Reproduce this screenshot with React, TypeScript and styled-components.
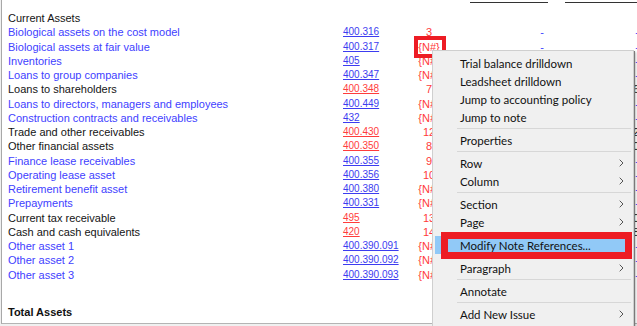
import { FC } from "react";
import styled, { createGlobalStyle } from "styled-components";

type Line = {
  label: string;
  account: string;
  note: string;
  linked: boolean;
  col4: string;
};

type MenuEntry =
  | { kind: "item"; label: string; sub?: boolean; active?: boolean }
  | { kind: "sep" };

const lines: Line[] = [
  { label: "Biological assets on the cost model", account: "400.316", note: "3", linked: true, col4: "-" },
  { label: "Biological assets at fair value", account: "400.317", note: "{N#}", linked: true, col4: "-" },
  { label: "Inventories", account: "405", note: "{N#}", linked: true, col4: "-" },
  { label: "Loans to group companies", account: "400.347", note: "{N#}", linked: true, col4: "-" },
  { label: "Loans to shareholders", account: "400.348", note: "7", linked: false, col4: "1 236" },
  { label: "Loans to directors, managers and employees", account: "400.449", note: "{N#}", linked: true, col4: "-" },
  { label: "Construction contracts and receivables", account: "432", note: "{N#}", linked: true, col4: "-" },
  { label: "Trade and other receivables", account: "400.430", note: "12", linked: false, col4: "4 512" },
  { label: "Other financial assets", account: "400.350", note: "8", linked: false, col4: "3 810" },
  { label: "Finance lease receivables", account: "400.355", note: "9", linked: true, col4: "-" },
  { label: "Operating lease asset", account: "400.356", note: "10", linked: true, col4: "-" },
  { label: "Retirement benefit asset", account: "400.380", note: "{N#}", linked: true, col4: "-" },
  { label: "Prepayments", account: "400.331", note: "{N#}", linked: true, col4: "-" },
  { label: "Current tax receivable", account: "495", note: "13", linked: false, col4: "230" },
  { label: "Cash and cash equivalents", account: "420", note: "14", linked: false, col4: "1 058" },
  { label: "Other asset 1", account: "400.390.091", note: "{N#}", linked: true, col4: "-" },
  { label: "Other asset 2", account: "400.390.092", note: "{N#}", linked: true, col4: "-" },
  { label: "Other asset 3", account: "400.390.093", note: "{N#}", linked: true, col4: "-" },
];

const menu: MenuEntry[] = [
  { kind: "item", label: "Trial balance drilldown" },
  { kind: "item", label: "Leadsheet drilldown" },
  { kind: "item", label: "Jump to accounting policy" },
  { kind: "item", label: "Jump to note" },
  { kind: "sep" },
  { kind: "item", label: "Properties" },
  { kind: "sep" },
  { kind: "item", label: "Row", sub: true },
  { kind: "item", label: "Column", sub: true },
  { kind: "sep" },
  { kind: "item", label: "Section", sub: true },
  { kind: "item", label: "Page", sub: true },
  { kind: "sep" },
  { kind: "item", label: "Modify Note References...", active: true },
  { kind: "sep" },
  { kind: "item", label: "Paragraph", sub: true },
  { kind: "sep" },
  { kind: "item", label: "Annotate" },
  { kind: "sep" },
  { kind: "item", label: "Add New Issue", sub: true },
];

const GlobalStyle = createGlobalStyle`
  body {
    margin: 0;
    background: #f0f0f0;
    overflow: hidden;
  }
`;

const Chevron: FC = () => (
  <svg width="5" height="8" viewBox="0 0 5 8">
    <path d="M0.7 0.7 L4 4 L0.7 7.3" fill="none" stroke="#555" strokeWidth="1" />
  </svg>
);

export const App: FC = () => {
  return (
    <StScreen>
      <GlobalStyle />
      <StDocument>
        <StHeaderRow>
          <span />
          <span />
          <span />
          <StRule $inset={26} />
          <StRule $inset={17} />
        </StHeaderRow>
        <StSection>
          <StRow>
            <StLabel $linked={false}>Current Assets</StLabel>
          </StRow>
          {lines.map((line) => (
            <StRow key={line.label}>
              <StLabel $linked={line.linked}>{line.label}</StLabel>
              <StAccount $linked={line.linked}>{line.account}</StAccount>
              <StNote>{line.note}</StNote>
              <StAmount $linked={line.linked}>{line.linked ? "-" : "0"}</StAmount>
              <StAmount $linked={line.linked}>{line.col4}</StAmount>
            </StRow>
          ))}
          <StTotalRow>
            <StTotal>Total Assets</StTotal>
          </StTotalRow>
        </StSection>
      </StDocument>

      <StMarker $x={414} $y={36} $w={32} $h={22} $b={4} />

      <StMenu>
        {menu.map((entry, index) =>
          entry.kind === "sep" ? (
            <StSeparator key={index} />
          ) : (
            <StMenuItem key={index} $active={!!entry.active}>
              <span>{entry.label}</span>
              {entry.sub && <Chevron />}
            </StMenuItem>
          )
        )}
      </StMenu>

      <StMarker $x={441} $y={232} $w={191} $h={27} $b={7} />
    </StScreen>
  );
};

export default App;

const StScreen = styled.div`
  position: relative;
  width: 637px;
  height: 326px;
  overflow: hidden;
  background: #f0f0f0;
`;

const StDocument = styled.div`
  margin-left: 1px;
  height: 323px;
  background: #fff;
  border-left: 1px solid #a8a8a8;
  border-bottom: 1px solid #b4b4b4;
  padding-left: 6px;
  overflow: hidden;
`;

const columns = "335px 71px 30px 104px 95px";

const StHeaderRow = styled.div`
  display: grid;
  grid-template-columns: ${columns};
  height: 3px;
`;

const StRule = styled.span<{ $inset: number }>`
  margin-left: ${(p) => p.$inset}px;
  border-bottom: 1px solid #333;
`;

const StSection = styled.div`
  padding-top: 8px;
`;

const StRow = styled.div`
  display: grid;
  grid-template-columns: ${columns};
  height: 14.25px;
  line-height: 14.25px;
  font-family: "Liberation Sans", Arial, sans-serif;
  font-size: 11px;
  white-space: nowrap;
`;

const StLabel = styled.span<{ $linked: boolean }>`
  color: ${(p) => (p.$linked ? "#4141ff" : "#141414")};
`;

const StAccount = styled.span<{ $linked: boolean }>`
  font-size: 10px;
  color: ${(p) => (p.$linked ? "#3c3cf0" : "#ff3c3c")};
  text-decoration: underline;
`;

const StNote = styled.span`
  color: #ff3a3a;
  text-align: center;
`;

const StAmount = styled.span<{ $linked: boolean }>`
  text-align: right;
  padding-right: 4px;
  color: ${(p) => (p.$linked ? "#4141ff" : "#141414")};
`;

const StTotalRow = styled(StRow)`
  margin-top: 23px;
`;

const StTotal = styled.span`
  font-weight: bold;
  color: #111;
`;

const StMenu = styled.div`
  position: absolute;
  left: 432px;
  top: 50px;
  width: 200px;
  height: 290px;
  padding-top: 3px;
  background: #f0f0f0;
  border: 1px solid #cfcfcf;
  box-shadow: 1px 1px 0 #7a7a7a, 2px 2px 2px rgba(0, 0, 0, 0.25);
  font-family: Lato, "Noto Sans", sans-serif;
  font-size: 11.5px;
  color: #111;
`;

const StMenuItem = styled.div<{ $active: boolean }>`
  display: flex;
  align-items: center;
  justify-content: space-between;
  height: 18px;
  margin: 0 2px;
  padding: 0 7px 0 25px;
  background: ${(p) => (p.$active ? "#91c9f7" : "transparent")};
`;

const StSeparator = styled.div`
  height: 5px;
  margin: 0 2px 0 24px;
  display: flex;
  align-items: center;

  &::before {
    content: "";
    flex: 1;
    border-top: 1px solid #d7d7d7;
  }
`;

const StMarker = styled.div<{ $x: number; $y: number; $w: number; $h: number; $b: number }>`
  position: absolute;
  left: ${(p) => p.$x}px;
  top: ${(p) => p.$y}px;
  width: ${(p) => p.$w}px;
  height: ${(p) => p.$h}px;
  box-sizing: border-box;
  border: ${(p) => p.$b}px solid #ed1c24;
`;
